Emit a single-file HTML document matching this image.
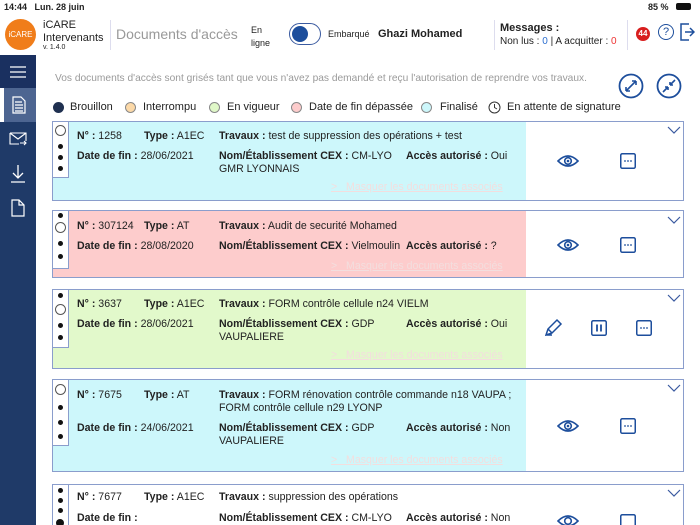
<!DOCTYPE html>
<html style="overflow:hidden;width:700px;height:525px"><head><meta charset="utf-8"><style>
*{margin:0;padding:0;box-sizing:border-box}
body{width:700px;height:525px;overflow:hidden;background:#fff;font-family:"Liberation Sans",sans-serif;color:#222;position:relative}
.a{position:absolute;white-space:nowrap}
.card{position:absolute;left:52px;width:632px;border:1px solid #8a9dcc;background:#fff}
.col{position:absolute;left:0;top:0;bottom:0;width:473px}
.ind{position:absolute;left:0;top:0;width:16px;border-right:1px solid #8a9dcc;border-bottom:1px solid #8a9dcc;background:#fff}
.d{position:absolute;left:5px;width:5px;height:5px;border-radius:50%;background:#111}
.o{position:absolute;left:2px;width:11px;height:11px;border-radius:50%;border:1px solid #555}
.t{position:absolute;font-size:10.6px;white-space:nowrap;line-height:13px}
.t b{font-weight:bold}
.m{position:absolute;font-size:10.6px;color:#f3dede;text-decoration:underline;white-space:nowrap}
</style></head><body>
<div class="a" style="left:4px;top:2px;font-size:9px;font-weight:bold">14:44&nbsp;&nbsp;&nbsp;Lun. 28 juin</div>
<div class="a" style="left:648px;top:2px;font-size:9px;font-weight:bold">85 %</div>
<div class="a" style="left:676px;top:3px;width:15px;height:7px;background:#111;border-radius:2px"></div>
<div class="a" style="left:5px;top:19px;width:31px;height:31px;border-radius:50%;background:#f07d1a;color:#fff;font-size:8px;line-height:31px;text-align:center">iCARE</div>
<div class="a" style="left:43px;top:19px;font-size:11px;line-height:13px">iCARE<br>Intervenants</div>
<div class="a" style="left:43px;top:44px;font-size:7px">v. 1.4.0</div>
<div class="a" style="left:110px;top:20px;width:1px;height:30px;background:#dde"></div>
<div class="a" style="left:116px;top:26px;font-size:14px;color:#999">Documents d'accès</div>
<div class="a" style="left:251px;top:24px;font-size:9px;line-height:13px">En<br>ligne</div>
<div class="a" style="left:289px;top:23px;width:32px;height:22px;border-radius:11px;border:1px solid #3a5aa0;background:#fff"></div>
<div class="a" style="left:292px;top:26px;width:16px;height:16px;border-radius:50%;background:#1d4e9c"></div>
<div class="a" style="left:328px;top:29px;font-size:9px">Embarqué</div>
<div class="a" style="left:378px;top:28px;font-size:11px;font-weight:bold">Ghazi Mohamed</div>
<div class="a" style="left:494px;top:20px;width:1px;height:30px;background:#dde"></div>
<div class="a" style="left:500px;top:22px;font-size:11px;font-weight:bold">Messages :</div>
<div class="a" style="left:500px;top:36px;font-size:10px">Non lus : <span style="color:#2c6fd0">0</span> | A acquitter : <span style="color:#e33">0</span></div>
<div class="a" style="left:627px;top:20px;width:1px;height:30px;background:#dde"></div>
<div class="a" style="left:636px;top:27px;width:14px;height:14px;border-radius:50%;background:#d81e1e;color:#fff;font-size:8px;font-weight:bold;text-align:center;line-height:14px">44</div>
<div class="a" style="left:658px;top:24px;width:16px;height:16px;border-radius:50%;border:1.5px solid #1d4e9c;color:#1d4e9c;font-size:11px;text-align:center;line-height:14px">?</div>
<svg class="a" style="left:679px;top:22px" width="16" height="20"><path d="M10 2H2V18H10M6 10H15M11 6L15 10L11 14" fill="none" stroke="#1d4e9c" stroke-width="1.5"/></svg>
<div class="a" style="left:0;top:55px;width:36px;height:470px;background:#1f3a68"></div>
<div class="a" style="left:0;top:55px;width:36px;height:33px;background:#1a3060"></div>
<svg class="a" style="left:10px;top:66px" width="16" height="12"><path d="M0 1H16M0 6H16M0 11H16" stroke="#fff" stroke-width="1.3"/></svg>
<div class="a" style="left:0;top:88px;width:4px;height:34px;background:#fff"></div>
<div class="a" style="left:4px;top:88px;width:32px;height:34px;background:#4d6591"></div>
<svg class="a" style="left:12px;top:96px" width="14" height="18"><path d="M1 1H9L13 5V17H1Z M3 6H10M3 9H11M3 12H11M3 15H11" fill="none" stroke="#fff" stroke-width="1.2"/></svg>
<svg class="a" style="left:9px;top:132px" width="18" height="14"><path d="M1 1H17V9M1 1V12H10M1 1L9 7L17 1M11 11H17M15 9L17 11L15 13" fill="none" stroke="#fff" stroke-width="1.1"/></svg>
<svg class="a" style="left:10px;top:164px" width="16" height="20"><path d="M8 1V14M3 9L8 14L13 9M1 18H15" fill="none" stroke="#fff" stroke-width="1.3"/></svg>
<svg class="a" style="left:11px;top:199px" width="14" height="18"><path d="M1 1H8L13 6V17H1Z M8 1V6H13" fill="none" stroke="#fff" stroke-width="1.2"/></svg>
<div class="a" style="left:55px;top:73px;font-size:10.2px;color:#9a9a9a">Vos documents d'accès sont grisés tant que vous n'avez pas demandé et reçu l'autorisation de reprendre vos travaux.</div>
<svg class="a" style="left:618px;top:73px" width="26" height="26"><circle cx="13" cy="13" r="11.5" fill="none" stroke="#1d4e9c" stroke-width="1.8"/><path d="M8 18L18 8M8 18V14M8 18H12M18 8H14M18 8V12" fill="none" stroke="#1d4e9c" stroke-width="1.6"/></svg>
<svg class="a" style="left:656px;top:73px" width="26" height="26"><circle cx="13" cy="13" r="11.5" fill="none" stroke="#1d4e9c" stroke-width="1.8"/><path d="M7 19L12 14M12 14V17M12 14H9M19 7L14 12M14 12V9M14 12H17" fill="none" stroke="#1d4e9c" stroke-width="1.6"/></svg>
<div class="a" style="left:53px;top:102px;width:11px;height:11px;border-radius:50%;background:#1f3050"></div>
<div class="a" style="left:70px;top:101px;font-size:11px">Brouillon</div>
<div class="a" style="left:125px;top:102px;width:11px;height:11px;border-radius:50%;background:#fcd9a8;border:1px solid #888"></div>
<div class="a" style="left:143px;top:101px;font-size:11px">Interrompu</div>
<div class="a" style="left:209px;top:102px;width:11px;height:11px;border-radius:50%;background:#e0f8c8;border:1px solid #888"></div>
<div class="a" style="left:227px;top:101px;font-size:11px">En vigueur</div>
<div class="a" style="left:291px;top:102px;width:11px;height:11px;border-radius:50%;background:#fdcccc;border:1px solid #888"></div>
<div class="a" style="left:309px;top:101px;font-size:11px">Date de fin dépassée</div>
<div class="a" style="left:421px;top:102px;width:11px;height:11px;border-radius:50%;background:#cdf7fb;border:1px solid #888"></div>
<div class="a" style="left:440px;top:101px;font-size:11px">Finalisé</div>
<svg class="a" style="left:488px;top:101px" width="13" height="13"><circle cx="6.5" cy="6.5" r="5.5" fill="none" stroke="#333"/><path d="M6.5 3V6.5L9 8" fill="none" stroke="#333"/></svg>
<div class="a" style="left:507px;top:101px;font-size:11px">En attente de signature</div>

<div class="card" style="top:121px;height:80px">
 <div class="col" style="background:#cdf7fb"></div>
 <div class="ind" style="height:56px"><div class="o" style="top:3px"></div><div class="d" style="top:22px"></div><div class="d" style="top:33px"></div><div class="d" style="top:44px"></div></div>
 <div class="t" style="left:24px;top:8px"><b>N° :</b> 1258</div>
 <div class="t" style="left:91px;top:8px"><b>Type :</b> A1EC</div>
 <div class="t" style="left:166px;top:8px"><b>Travaux :</b> test de suppression des opérations + test</div>
 <div class="t" style="left:24px;top:28px"><b>Date de fin :</b> 28/06/2021</div>
 <div class="t" style="left:166px;top:28px"><b>Nom/Établissement CEX :</b> CM-LYO<br>GMR LYONNAIS</div>
 <div class="t" style="left:353px;top:28px"><b>Accès autorisé :</b> Oui</div>
 <div class="m" style="left:278px;top:59px">&gt;&nbsp;&nbsp;&nbsp;Masquer les documents associés</div>
</div>
<div class="card" style="top:210px;height:68px">
 <div class="col" style="background:#fdcccc"></div>
 <div class="ind" style="height:58px"><div class="d" style="top:2px"></div><div class="o" style="top:11px"></div><div class="d" style="top:30px"></div><div class="d" style="top:43px"></div></div>
 <div class="t" style="left:24px;top:9px"><b>N° :</b> 307124</div>
 <div class="t" style="left:91px;top:9px"><b>Type :</b> AT</div>
 <div class="t" style="left:166px;top:9px"><b>Travaux :</b> Audit de securité Mohamed</div>
 <div class="t" style="left:24px;top:29px"><b>Date de fin :</b> 28/08/2020</div>
 <div class="t" style="left:166px;top:29px"><b>Nom/Établissement CEX :</b> Vielmoulin</div>
 <div class="t" style="left:353px;top:29px"><b>Accès autorisé :</b> ?</div>
 <div class="m" style="left:278px;top:49px">&gt;&nbsp;&nbsp;&nbsp;Masquer les documents associés</div>
</div>
<div class="card" style="top:289px;height:80px">
 <div class="col" style="background:#e2f9cb"></div>
 <div class="ind" style="height:58px"><div class="d" style="top:3px"></div><div class="o" style="top:14px"></div><div class="d" style="top:33px"></div><div class="d" style="top:45px"></div></div>
 <div class="t" style="left:24px;top:8px"><b>N° :</b> 3637</div>
 <div class="t" style="left:91px;top:8px"><b>Type :</b> A1EC</div>
 <div class="t" style="left:166px;top:8px"><b>Travaux :</b> FORM contrôle cellule n24 VIELM</div>
 <div class="t" style="left:24px;top:28px"><b>Date de fin :</b> 28/06/2021</div>
 <div class="t" style="left:166px;top:28px"><b>Nom/Établissement CEX :</b> GDP<br>VAUPALIERE</div>
 <div class="t" style="left:353px;top:28px"><b>Accès autorisé :</b> Oui</div>
 <div class="m" style="left:278px;top:59px">&gt;&nbsp;&nbsp;&nbsp;Masquer les documents associés</div>
</div>
<div class="card" style="top:379px;height:93px">
 <div class="col" style="background:#cdf7fb"></div>
 <div class="ind" style="height:66px"><div class="o" style="top:4px"></div><div class="d" style="top:25px"></div><div class="d" style="top:40px"></div><div class="d" style="top:54px"></div></div>
 <div class="t" style="left:24px;top:9px"><b>N° :</b> 7675</div>
 <div class="t" style="left:91px;top:9px"><b>Type :</b> AT</div>
 <div class="t" style="left:166px;top:9px"><b>Travaux :</b> FORM rénovation contrôle commande n18 VAUPA ;<br>FORM contrôle cellule n29 LYONP</div>
 <div class="t" style="left:24px;top:42px"><b>Date de fin :</b> 24/06/2021</div>
 <div class="t" style="left:166px;top:42px"><b>Nom/Établissement CEX :</b> GDP<br>VAUPALIERE</div>
 <div class="t" style="left:353px;top:42px"><b>Accès autorisé :</b> Non</div>
 <div class="m" style="left:278px;top:74px">&gt;&nbsp;&nbsp;&nbsp;Masquer les documents associés</div>
</div>
<div class="card" style="top:484px;height:60px">
 <div class="ind" style="height:60px;border-bottom:none"><div class="d" style="top:3px"></div><div class="d" style="top:13px"></div><div class="d" style="top:23px"></div><div class="d" style="top:34px;width:8px;height:8px;left:3px"></div></div>
 <div class="t" style="left:24px;top:6px"><b>N° :</b> 7677</div>
 <div class="t" style="left:91px;top:6px"><b>Type :</b> A1EC</div>
 <div class="t" style="left:166px;top:6px"><b>Travaux :</b> suppression des opérations</div>
 <div class="t" style="left:24px;top:27px"><b>Date de fin :</b></div>
 <div class="t" style="left:166px;top:27px"><b>Nom/Établissement CEX :</b> CM-LYO</div>
 <div class="t" style="left:353px;top:27px"><b>Accès autorisé :</b> Non</div>
</div>

<svg class="a" style="left:667px;top:126px" width="14" height="8"><path d="M1 1L7 7L13 1" fill="none" stroke="#3a5aa0" stroke-width="1.2"/></svg>
<svg class="a" style="left:667px;top:216px" width="14" height="8"><path d="M1 1L7 7L13 1" fill="none" stroke="#3a5aa0" stroke-width="1.2"/></svg>
<svg class="a" style="left:667px;top:294px" width="14" height="8"><path d="M1 1L7 7L13 1" fill="none" stroke="#3a5aa0" stroke-width="1.2"/></svg>
<svg class="a" style="left:667px;top:384px" width="14" height="8"><path d="M1 1L7 7L13 1" fill="none" stroke="#3a5aa0" stroke-width="1.2"/></svg>
<svg class="a" style="left:667px;top:489px" width="14" height="8"><path d="M1 1L7 7L13 1" fill="none" stroke="#3a5aa0" stroke-width="1.2"/></svg>

<svg class="a" style="left:557px;top:154px" width="22" height="14"><path d="M1 7Q11 -3 21 7Q11 17 1 7Z" fill="none" stroke="#1d4e9c" stroke-width="1.6"/><circle cx="11" cy="7" r="3.3" fill="none" stroke="#1d4e9c" stroke-width="1.6"/><circle cx="11" cy="7" r="1.3" fill="#1d4e9c"/></svg>
<svg class="a" style="left:557px;top:238px" width="22" height="14"><path d="M1 7Q11 -3 21 7Q11 17 1 7Z" fill="none" stroke="#1d4e9c" stroke-width="1.6"/><circle cx="11" cy="7" r="3.3" fill="none" stroke="#1d4e9c" stroke-width="1.6"/><circle cx="11" cy="7" r="1.3" fill="#1d4e9c"/></svg>
<svg class="a" style="left:557px;top:419px" width="22" height="14"><path d="M1 7Q11 -3 21 7Q11 17 1 7Z" fill="none" stroke="#1d4e9c" stroke-width="1.6"/><circle cx="11" cy="7" r="3.3" fill="none" stroke="#1d4e9c" stroke-width="1.6"/><circle cx="11" cy="7" r="1.3" fill="#1d4e9c"/></svg>
<svg class="a" style="left:557px;top:514px" width="22" height="14"><path d="M1 7Q11 -3 21 7Q11 17 1 7Z" fill="none" stroke="#1d4e9c" stroke-width="1.6"/><circle cx="11" cy="7" r="3.3" fill="none" stroke="#1d4e9c" stroke-width="1.6"/></svg>

<svg class="a" style="left:620px;top:153px" width="16" height="16"><rect x="0.75" y="0.75" width="14.5" height="14.5" rx="1.5" fill="none" stroke="#1d4e9c" stroke-width="1.5"/><circle cx="5" cy="8" r="0.9" fill="#1d4e9c"/><circle cx="8" cy="8" r="0.9" fill="#1d4e9c"/><circle cx="11" cy="8" r="0.9" fill="#1d4e9c"/></svg>
<svg class="a" style="left:620px;top:237px" width="16" height="16"><rect x="0.75" y="0.75" width="14.5" height="14.5" rx="1.5" fill="none" stroke="#1d4e9c" stroke-width="1.5"/><circle cx="5" cy="8" r="0.9" fill="#1d4e9c"/><circle cx="8" cy="8" r="0.9" fill="#1d4e9c"/><circle cx="11" cy="8" r="0.9" fill="#1d4e9c"/></svg>
<svg class="a" style="left:636px;top:320px" width="16" height="16"><rect x="0.75" y="0.75" width="14.5" height="14.5" rx="1.5" fill="none" stroke="#1d4e9c" stroke-width="1.5"/><circle cx="5" cy="8" r="0.9" fill="#1d4e9c"/><circle cx="8" cy="8" r="0.9" fill="#1d4e9c"/><circle cx="11" cy="8" r="0.9" fill="#1d4e9c"/></svg>
<svg class="a" style="left:620px;top:418px" width="16" height="16"><rect x="0.75" y="0.75" width="14.5" height="14.5" rx="1.5" fill="none" stroke="#1d4e9c" stroke-width="1.5"/><circle cx="5" cy="8" r="0.9" fill="#1d4e9c"/><circle cx="8" cy="8" r="0.9" fill="#1d4e9c"/><circle cx="11" cy="8" r="0.9" fill="#1d4e9c"/></svg>
<svg class="a" style="left:620px;top:514px" width="16" height="16"><rect x="0.75" y="0.75" width="14.5" height="14.5" rx="1.5" fill="none" stroke="#1d4e9c" stroke-width="1.5"/></svg>

<svg class="a" style="left:545px;top:318px" width="18" height="18"><path d="M1 17L3 11L12 2L16 6L7 15Z M3 11L7 15 M1 17H7" fill="none" stroke="#1d4e9c" stroke-width="1.5"/></svg>
<svg class="a" style="left:591px;top:320px" width="16" height="16"><rect x="0.75" y="0.75" width="14.5" height="14.5" rx="1.5" fill="none" stroke="#1d4e9c" stroke-width="1.5"/><path d="M6 4.5V11.5M10 4.5V11.5" stroke="#1d4e9c" stroke-width="1.8"/></svg>
</body></html>
